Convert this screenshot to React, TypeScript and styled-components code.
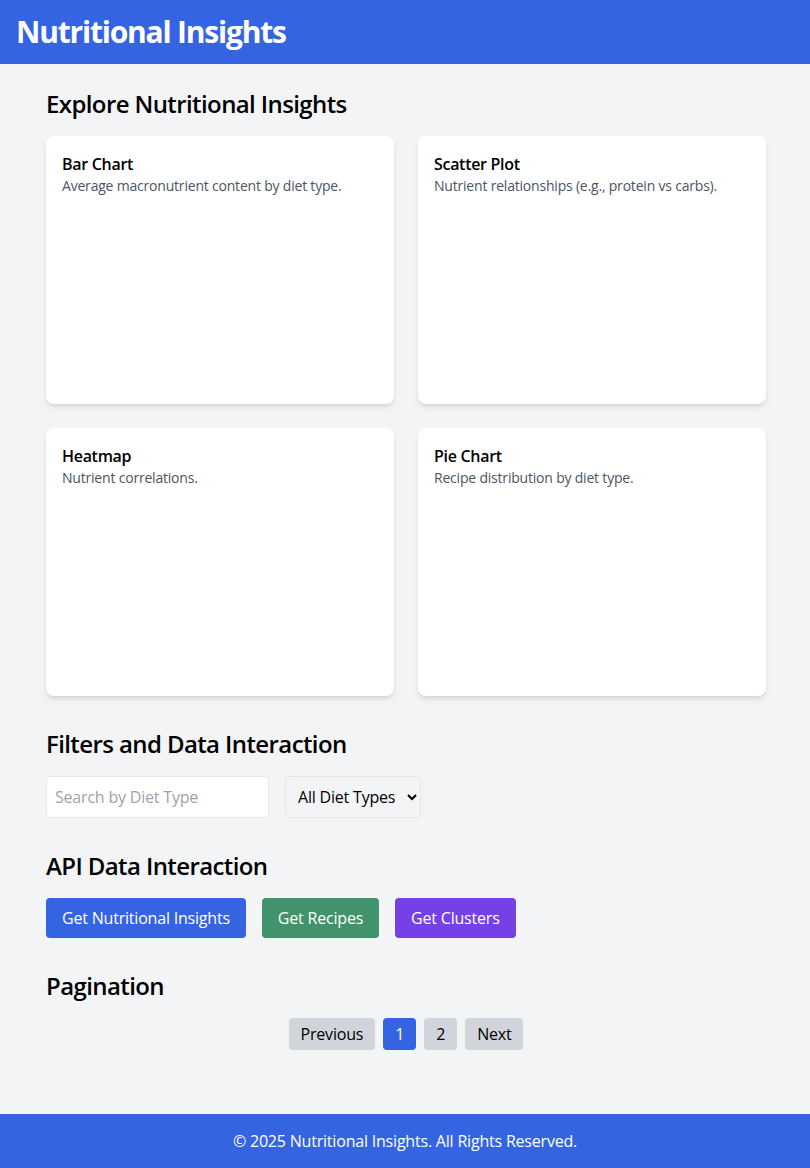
import React, { useState } from 'react';
import styled, { createGlobalStyle } from 'styled-components';

const GlobalStyle = createGlobalStyle`
  html, body {
    margin: 0;
    padding: 0;
    background: #f3f4f6;
    font-family: 'Open Sans', 'Noto Sans', sans-serif;
    letter-spacing: -0.2px;
    color: #000;
  }
  * { box-sizing: border-box; }
`;

const charts = [
  { title: 'Bar Chart', desc: 'Average macronutrient content by diet type.' },
  { title: 'Scatter Plot', desc: 'Nutrient relationships (e.g., protein vs carbs).' },
  { title: 'Heatmap', desc: 'Nutrient correlations.' },
  { title: 'Pie Chart', desc: 'Recipe distribution by diet type.' },
];

export default function App() {
  const [page, setPage] = useState(1);
  const [search, setSearch] = useState('');

  return (
    <Page>
      <GlobalStyle />
      <Header>
        <h1>Nutritional Insights</h1>
      </Header>
      <Main>
        <Section>
          <Heading>Explore Nutritional Insights</Heading>
          <ChartGrid>
            {charts.map((c) => (
              <Card key={c.title}>
                <h3>{c.title}</h3>
                <p>{c.desc}</p>
                <ChartArea />
              </Card>
            ))}
          </ChartGrid>
        </Section>

        <Section>
          <Heading>Filters and Data Interaction</Heading>
          <FilterRow>
            <SearchInput placeholder="Search by Diet Type" value={search} onChange={(e) => setSearch(e.target.value)} />
            <DietSelect defaultValue="all">
              <option value="all">All Diet Types</option>
              <option value="vegan">Vegan</option>
              <option value="keto">Keto</option>
              <option value="paleo">Paleo</option>
            </DietSelect>
          </FilterRow>
        </Section>

        <Section>
          <Heading>API Data Interaction</Heading>
          <ButtonRow>
            <ActionButton $color="#3564e3">Get Nutritional Insights</ActionButton>
            <ActionButton $color="#41936b">Get Recipes</ActionButton>
            <ActionButton $color="#7540e6">Get Clusters</ActionButton>
          </ButtonRow>
        </Section>

        <Section>
          <Heading>Pagination</Heading>
          <Pager>
            <PageButton onClick={() => setPage(Math.max(1, page - 1))}>Previous</PageButton>
            {[1, 2].map((n) => (
              <PageButton key={n} $active={page === n} onClick={() => setPage(n)}>
                {n}
              </PageButton>
            ))}
            <PageButton onClick={() => setPage(Math.min(2, page + 1))}>Next</PageButton>
          </Pager>
        </Section>
      </Main>
      <Footer>© 2025 Nutritional Insights. All Rights Reserved.</Footer>
    </Page>
  );
}

const Page = styled.div`
  min-height: 100vh;
  display: flex;
  flex-direction: column;
`;

const Header = styled.header`
  background: #3564e3;
  color: #fff;
  height: 64px;
  padding: 0 16px;
  display: flex;
  align-items: center;
  > h1 {
    margin: 0;
    font-size: 30px;
    line-height: 36px;
    font-weight: 700;
    letter-spacing: -1.2px;
  }
`;

const Main = styled.main`
  width: 768px;
  margin: 0 auto;
  padding: 24px 23px 64px 25px;
  display: flex;
  flex-direction: column;
  gap: 32px;
`;

const Section = styled.section`
  display: flex;
  flex-direction: column;
  gap: 16px;
`;

const Heading = styled.h2`
  margin: 0;
  font-size: 24px;
  line-height: 32px;
  font-weight: 600;
  letter-spacing: -0.6px;
`;

const ChartGrid = styled.div`
  display: grid;
  grid-template-columns: 1fr 1fr;
  gap: 24px;
`;

const Card = styled.div`
  background: #fff;
  border-radius: 8px;
  padding: 16px;
  box-shadow: 0 4px 6px -1px rgba(0, 0, 0, 0.1), 0 2px 4px -2px rgba(0, 0, 0, 0.1);
  > h3 {
    margin: 0;
    font-size: 16px;
    line-height: 24px;
    font-weight: 600;
    letter-spacing: -0.3px;
  }
  > p {
    margin: 0;
    font-size: 14px;
    line-height: 20px;
    color: #4b5563;
  }
`;

const ChartArea = styled.div`
  height: 192px;
`;

const FilterRow = styled.div`
  display: flex;
  gap: 16px;
  align-items: center;
`;

const SearchInput = styled.input`
  width: 223px;
  height: 42px;
  padding: 8px;
  font: inherit;
  font-size: 16px;
  letter-spacing: -0.2px;
  border: 1px solid #e5e7eb;
  border-radius: 4px;
  background: #fff;
  outline: none;
  &::placeholder {
    color: #9ca3af;
  }
`;

const DietSelect = styled.select`
  height: 42px;
  width: 136px;
  padding: 8px 6px 8px 8px;
  font: inherit;
  font-size: 16px;
  letter-spacing: -0.2px;
  color: #000;
  border: 1px solid #e5e7eb;
  border-radius: 4px;
  background: #f3f4f6;
`;

const ButtonRow = styled.div`
  display: flex;
  gap: 16px;
`;

const ActionButton = styled.button<{ $color: string }>`
  height: 40px;
  padding: 0 16px;
  border: none;
  border-radius: 4px;
  background: ${(p) => p.$color};
  color: #fff;
  font: inherit;
  font-size: 16px;
  letter-spacing: -0.2px;
  cursor: pointer;
`;

const Pager = styled.div`
  display: flex;
  justify-content: center;
  gap: 8px;
`;

const PageButton = styled.button<{ $active?: boolean }>`
  height: 32px;
  min-width: 31px;
  padding: 0 12px;
  border: none;
  border-radius: 4px;
  background: ${(p) => (p.$active ? '#3564e3' : '#d1d5db')};
  color: ${(p) => (p.$active ? '#fff' : '#000')};
  font: inherit;
  font-size: 16px;
  letter-spacing: -0.2px;
  cursor: pointer;
`;

const Footer = styled.footer`
  margin-top: auto;
  background: #3564e3;
  color: #fff;
  text-align: center;
  padding: 16px;
  font-size: 16px;
  line-height: 22px;
`;
